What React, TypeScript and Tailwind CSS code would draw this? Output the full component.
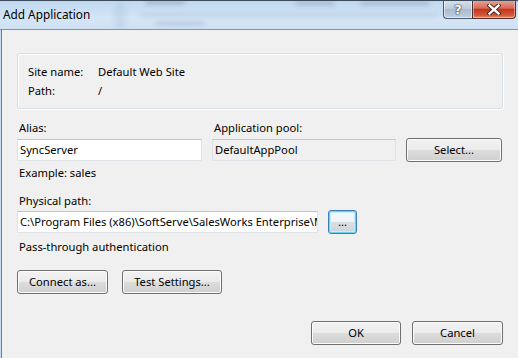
import React from "react";

const font = "font-['Noto_Sans','Liberation_Sans',sans-serif]";

function WinButton({
  label,
  className = "",
  focused = false,
}: {
  label: string;
  className?: string;
  focused?: boolean;
}) {
  return (
    <div
      className={
        "flex items-center justify-center rounded-[3px] border text-[11.2px] text-black " +
        (focused
          ? "border-[#3c7fb1] bg-[linear-gradient(to_bottom,#f4f9fc_0%,#eef3f6_50%,#dcdfe2_50%,#d0d3d6_100%)] shadow-[inset_0_0_0_1px_#6fd0f5,inset_0_0_0_2px_#c6ecfb] "
          : "border-[#707070] bg-[linear-gradient(to_bottom,#f2f2f2_0%,#ebebeb_50%,#dddddd_50%,#cfcfcf_100%)] shadow-[inset_0_0_0_1px_#fbfbfb] ") +
        className
      }
    >
      {label}
    </div>
  );
}

function TextBox({
  value,
  className = "",
  disabled = false,
}: {
  value: string;
  className?: string;
  disabled?: boolean;
}) {
  return (
    <div
      className={
        "flex h-[22px] items-center overflow-hidden whitespace-nowrap border border-[#dfe3e8] border-t-[#c2c6cc] pl-[2px] text-[11.2px] text-black " +
        (disabled ? "bg-[#f0f0f0] " : "bg-white ") +
        className
      }
    >
      {value}
    </div>
  );
}

function TitleBar() {
  return (
    <div className="relative h-[30px] shrink-0 overflow-hidden border-b border-[#8595a6] border-t border-t-[#3c4a5a] bg-[linear-gradient(to_bottom,#c0d8f0,#d4e5f6_60%,#cfe1f4)]">
      {/* blurred desktop behind the glass */}
      <div className="absolute left-[145px] top-[-2px] h-[6px] w-[40px] rounded-full bg-[#5d6e82] opacity-25 blur-[2px]" />
      <div className="absolute left-[140px] top-[12px] h-[4px] w-[300px] rounded-full bg-[#7d90a6] opacity-20 blur-[2px]" />
      <div className="absolute left-[155px] top-[20px] h-[5px] w-[50px] rounded-full bg-[#8ea2b8] opacity-30 blur-[2px]" />
      <div className="absolute left-[295px] top-[-1px] h-[6px] w-[40px] rounded-full bg-[#6a7c90] opacity-25 blur-[2px]" />
      <div className="absolute left-[360px] top-[-1px] h-[6px] w-[70px] rounded-full bg-[#6a7c90] opacity-25 blur-[2px]" />
      <div className="absolute left-[115px] top-[0px] h-[28px] w-[10px] bg-[#aac2da] opacity-40 blur-[3px]" />

      <div className={"relative pl-[3px] pt-[5px] text-[11.8px] text-black " + font}>
        Add Application
      </div>

      <div className="absolute right-[2px] top-[-1px] flex">
        <div className="flex h-[19px] w-[29px] items-center justify-center rounded-bl-[4px] border border-t-0 border-r-0 border-[#4d5a6b] bg-[linear-gradient(to_bottom,#d7e2ee,#bccbdc_50%,#a9bace_51%,#c0d0e2)] shadow-[inset_0_0_0_1px_rgba(255,255,255,0.55)]">
          <span className="text-[13px] font-bold leading-none text-white [text-shadow:0_0_1px_#2d3a4a,0_0_1px_#2d3a4a,0_0_2px_#2d3a4a] font-['DejaVu_Sans',sans-serif]">
            ?
          </span>
        </div>
        <div className="flex h-[19px] w-[44px] items-center justify-center rounded-br-[4px] border border-t-0 border-[#4d3030] bg-[linear-gradient(to_bottom,#e8a79a,#d86b56_45%,#c1361d_52%,#d4583c_85%,#e88f68)] shadow-[inset_0_0_0_1px_rgba(255,220,210,0.5)]">
          <svg width="14" height="11" viewBox="0 0 14 11">
            <path d="M2.5 1.5 L11.5 9.5 M11.5 1.5 L2.5 9.5" stroke="#3a1a14" strokeWidth="4.2" strokeLinecap="square" />
            <path d="M2.5 1.5 L11.5 9.5 M11.5 1.5 L2.5 9.5" stroke="#ffffff" strokeWidth="2.4" strokeLinecap="square" />
          </svg>
        </div>
      </div>
    </div>
  );
}

export default function App() {
  return (
    <div className={"flex h-[358px] w-[518px] flex-col overflow-hidden bg-[#f0f0f0] " + font}>
      <TitleBar />
      <div className="flex flex-1">
        <div className="w-px bg-[#c9dbee]" />
        <div className="w-px bg-[#62809f]" />
        <div className="flex flex-1 flex-col pl-[15px] text-[11.2px] leading-[16px] text-black">
          {/* site info group */}
          <div className="mt-[23px] h-[56px] w-[486px] rounded-[3px] border border-[#d5dfe5] pl-[10px] pt-[8px] shadow-[1px_1px_0_#ffffff,inset_1px_1px_0_#ffffff]">
            <div className="flex h-[19px] items-center">
              <span className="w-[70px]">Site name:</span>
              <span>Default Web Site</span>
            </div>
            <div className="flex h-[19px] items-center">
              <span className="w-[70px]">Path:</span>
              <span>/</span>
            </div>
          </div>

          {/* alias / pool */}
          <div className="mt-[11px] flex h-[16px]">
            <span className="w-[195px] pl-[2px]">Alias:</span>
            <span className="pl-[2px]">Application pool:</span>
          </div>
          <div className="mt-[2px] flex h-[24px] items-center gap-[10px]">
            <TextBox value="SyncServer" className="w-[185px]" />
            <TextBox value="DefaultAppPool" className="w-[184px]" disabled />
            <WinButton label="Select..." className="h-[24px] w-[96px]" />
          </div>
          <div className="mt-[3px] pl-[2px]">Example: sales</div>

          {/* physical path */}
          <div className="mt-[12px] pl-[2px]">Physical path:</div>
          <div className="mt-[1px] flex h-[24px] items-center gap-[10px]">
            <TextBox
              value="C:\Program Files (x86)\SoftServe\SalesWorks Enterprise\M"
              className="w-[301px]"
            />
            <WinButton label="..." className="h-[24px] w-[29px]" focused />
          </div>
          <div className="mt-[5px] pl-[2px]">Pass-through authentication</div>

          <div className="mt-[15px] flex gap-[14px]">
            <WinButton label="Connect as..." className="h-[24px] w-[91px]" />
            <WinButton label="Test Settings..." className="h-[24px] w-[100px]" />
          </div>

          <div className="mt-[27px] flex gap-[11px] pl-[294px]">
            <WinButton label="OK" className="h-[24px] w-[90px]" />
            <WinButton label="Cancel" className="h-[24px] w-[91px]" />
          </div>
        </div>
      </div>
    </div>
  );
}
